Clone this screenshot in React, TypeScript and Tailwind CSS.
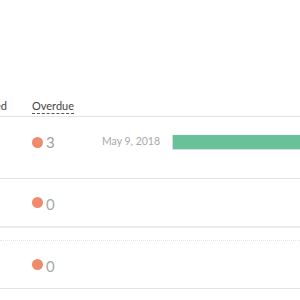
import React from "react";

function Dot() {
  return <span className="inline-block w-[11px] h-[11px] rounded-full bg-[#ef8b6b]" />;
}

export default function App() {
  return (
    <div
      className="w-[300px] h-[300px] overflow-hidden bg-white"
      style={{ fontFamily: "Lato, 'Open Sans', sans-serif" }}
    >
      <div className="h-[95px]" />
      {/* header */}
      <div className="flex items-end h-[22px] border-b border-[#e3e3e3] pb-[2px] text-[11px] text-[#444]">
        <div className="w-[7px] flex justify-end whitespace-nowrap">Completed</div>
        <div className="ml-[25px] leading-[12px] border-b border-dashed border-[#555] pb-[1px]">Overdue</div>
      </div>
      {/* row 1 */}
      <div className="flex items-center h-[62px] pb-[11px] border-b border-[#e3e3e3]">
        <div className="ml-[32px] w-[70px] flex items-center gap-[3px]">
          <Dot />
          <span className="text-[15px] leading-none text-[#a0a0a0]">3</span>
        </div>
        <div className="w-[70px] text-[10.5px] text-[#a8a8a8] whitespace-nowrap">May 9, 2018</div>
        <div className="flex-1 h-[15px] bg-[#67c29a] border-l border-b border-[#dcdcdc]" />
      </div>
      {/* row 2 */}
      <div className="flex items-center h-[49px] border-b-2 border-[#ececec]">
        <div className="ml-[32px] flex items-center gap-[3px]">
          <Dot />
          <span className="text-[15px] leading-none text-[#a8a8a8] mt-[3px]">0</span>
        </div>
      </div>
      <div className="h-[12px]" />
      {/* row 3 */}
      <div className="border-t border-dotted border-[#e6e6e6]">
        <div className="flex items-center h-[48px] border-b border-[#e3e3e3]">
          <div className="ml-[32px] flex items-center gap-[3px]">
            <Dot />
            <span className="text-[15px] leading-none text-[#a8a8a8] mt-[3px]">0</span>
          </div>
        </div>
      </div>
    </div>
  );
}
